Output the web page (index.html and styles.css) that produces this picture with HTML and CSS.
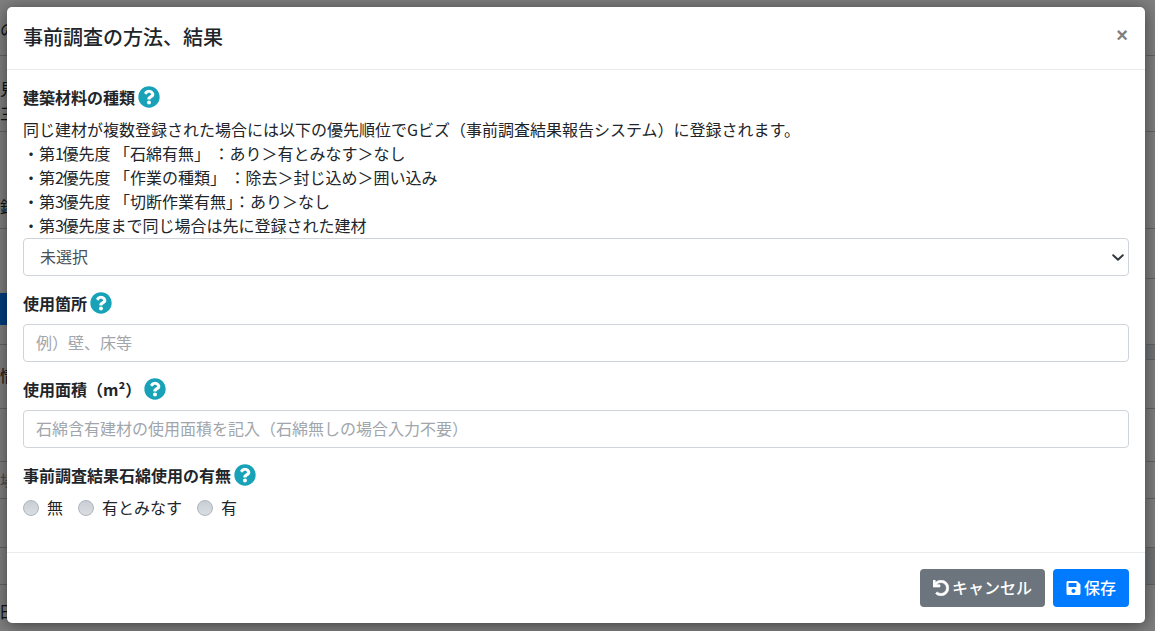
FILE: index.html
```html
<!DOCTYPE html>
<html lang="ja">
<head>
  <meta charset="UTF-8" />
  <title>事前調査の方法、結果</title>
  <link rel="stylesheet" href="styles.css">
</head>
<body>
  <div class="page-behind">
    <div class="behind-col left">
      <div class="behind-row h56"><span class="t30">の</span></div>
      <div class="behind-row h76"><span class="t20">見<br>三</span></div>
      <div class="behind-row h97"><span class="t60">録</span></div>
      <div class="behind-row h64 plain"></div>
      <div class="behind-row h32 navy"></div>
      <div class="behind-row h20"></div>
      <div class="behind-row h64"><span class="t18">情</span></div>
      <div class="behind-row h53"></div>
      <div class="behind-row h37 faint"><span class="t4">場</span></div>
      <div class="behind-row h49"></div>
      <div class="behind-row h37"></div>
      <div class="behind-row h46 plain"><span class="t14">田</span></div>
    </div>
    <div class="behind-col right">
      <div class="behind-row h56"></div>
      <div class="behind-row h76"></div>
      <div class="behind-row h97"></div>
      <div class="behind-row h50"></div>
      <div class="behind-row h66"></div>
      <div class="behind-row h15 shade"></div>
      <div class="behind-row h49"></div>
      <div class="behind-row h53"></div>
      <div class="behind-row h37"></div>
      <div class="behind-row h49"></div>
      <div class="behind-row h37 shade"></div>
    </div>
  </div>
  <div class="backdrop"></div>

  <div class="modal">
    <div class="modal-header">
      <h5>事前調査の方法、結果</h5>
      <span class="close">×</span>
    </div>
    <div class="modal-body">
      <div class="form-group">
        <label>建築材料の種類 <svg class="help" viewBox="0 0 512 512"><use href="#q"/></svg></label>
        <div class="note">
          同じ建材が複数登録された場合には以下の優先順位でGビズ（事前調査結果報告システム）に登録されます。<br>
          ・第<span class="num">1</span>優先度 「石綿有無」 ：あり＞有とみなす＞なし<br>
          ・第<span class="num">2</span>優先度 「作業の種類」 ：除去＞封じ込め＞囲い込み<br>
          ・第<span class="num">3</span>優先度 「切断作業有無」：あり＞なし<br>
          ・第<span class="num">3</span>優先度まで同じ場合は先に登録された建材
        </div>
        <div class="select">未選択
          <svg viewBox="0 0 12 7" class="chev"><path d="M1.2 1.2L6 5.800l4.800-4.600" fill="none" stroke="#343a40" stroke-width="2" stroke-linecap="round" stroke-linejoin="round"/></svg>
        </div>
      </div>
      <div class="form-group">
        <label>使用箇所 <svg class="help" viewBox="0 0 512 512"><use href="#q"/></svg></label>
        <input class="input" type="text" placeholder="例）壁、床等">
      </div>
      <div class="form-group">
        <label>使用面積（m²） <svg class="help" viewBox="0 0 512 512"><use href="#q"/></svg></label>
        <input class="input" type="text" placeholder="石綿含有建材の使用面積を記入（石綿無しの場合入力不要）">
      </div>
      <div class="form-group">
        <label>事前調査結果石綿使用の有無 <svg class="help" viewBox="0 0 512 512"><use href="#q"/></svg></label>
        <div class="radios">
          <span class="radio"><i></i>無</span>
          <span class="radio"><i></i>有とみなす</span>
          <span class="radio"><i></i>有</span>
        </div>
      </div>
    </div>
    <div class="modal-footer">
      <button class="btn gray">
        <svg class="undo" viewBox="0 0 512 512"><path fill="#fff" stroke="#fff" stroke-width="22" d="M212.3 224.3H12c-6.6 0-12-5.4-12-12V12C0 5.4 5.4 0 12 0h48c6.6 0 12 5.4 12 12v78.1C117.8 39.3 184.3 7.5 258.2 8c136.9 1 246.4 111.6 245.8 248.5C503.4 393.1 392.500 504 256 504c-64 0-122.300-24.300-166.300-64.100-5.100-4.600-5.300-12.500-.5-17.300l34-34c4.500-4.500 11.700-4.700 16.400-.5C170.800 415.300 211.600 432 256 432c97.300 0 176-78.700 176-176 0-97.400-78.700-176-176-176-58.500 0-110.300 28.500-142.300 72.300h98.600c6.600 0 12 5.400 12 12v48c0 6.600-5.400 12-12 12z"/></svg>キャンセル
      </button>
      <button class="btn blue">
        <svg class="disk" viewBox="0 0 448 512"><path fill="#fff" d="M433.900 129.900l-83.900-83.900A48 48 0 0 0 316.100 32H48C21.500 32 0 53.500 0 80v352c0 26.500 21.500 48 48 48h352c26.500 0 48-21.500 48-48V163.900a48 48 0 0 0-14.100-34zM224 416c-35.300 0-64-28.700-64-64 0-35.300 28.700-64 64-64s64 28.700 64 64c0 35.300-28.700 64-64 64zm96-304.500V212c0 6.600-5.400 12-12 12H76c-6.600 0-12-5.400-12-12V108c0-6.600 5.400-12 12-12h228.500c3.200 0 6.200 1.300 8.500 3.500l3.500 3.500A12 12 0 0 1 320 111.500z"/></svg>保存
      </button>
    </div>
  </div>

  <svg width="0" height="0" class="defs">
    <symbol id="q" viewBox="0 0 512 512">
      <path fill="#17a2b8" d="M504 256c0 137-111 248-248 248S8 393 8 256C8 119.100 119 8 256 8s248 111.100 248 248zM262.700 90c-54.500 0-89.300 23-116.500 63.800-3.500 5.300-2.400 12.400 2.700 16.300l34.700 26.300c5.200 3.900 12.600 3 16.700-2.100 17.900-22.700 30.100-35.800 57.300-35.800 20.400 0 45.700 13.100 45.700 33 0 15-12.400 22.700-32.600 34C247.100 238.500 216 258.900 216 300v4c0 6.600 5.400 12 12 12h56c6.600 0 12-5.400 12-12v-1.300c0-28.500 83.200-29.700 83.200-106.700 0-58-60.200-102-116.500-102zM256 338c-25.400 0-46 20.600-46 46 0 25.400 20.600 46 46 46s46-20.600 46-46c0-25.400-20.600-46-46-46z"/>
    </symbol>
  </svg>
</body>
</html>
```

FILE: styles.css
```css
* { box-sizing: border-box; }

html, body {
  margin: 0;
  height: 100%;
  overflow: hidden;
}

body {
  font-family: "Noto Sans CJK JP", "Noto Sans", sans-serif;
  font-size: 16px;
  color: #212529;
  background: #fff;
}

.defs { position: absolute; }

/* page that lies under the dialog, only its two edges show */
.page-behind {
  position: absolute;
  inset: 0;
  display: flex;
  justify-content: space-between;
}

.behind-col.left { width: 7px; }
.behind-col.right { width: 9px; }

.behind-row {
  border-bottom: 1px solid #c4c8cc;
  line-height: 25px;
  white-space: nowrap;
}

.behind-row.plain { border-bottom: none; }
.behind-row.navy { background: #007bff; border-bottom: none; }
.behind-row.faint { color: #999; }
.behind-row.shade { background: #e4e7ea; }

.h15 { height: 15px; }
.h20 { height: 20px; }
.h32 { height: 32px; }
.h37 { height: 37px; }
.h46 { height: 46px; }
.h49 { height: 49px; }
.h50 { height: 50px; }
.h53 { height: 53px; }
.h56 { height: 56px; }
.h64 { height: 64px; }
.h66 { height: 66px; }
.h76 { height: 76px; }
.h97 { height: 97px; }

.t4 { display: block; padding-top: 6px; }
.t14 { display: block; padding-top: 14px; }
.t18 { display: block; padding-top: 18px; }
.t20 { display: block; padding-top: 20px; }
.t30 { display: block; padding-top: 17px; }
.t60 { display: block; padding-top: 62px; }

.backdrop {
  position: absolute;
  inset: 0;
  background: rgba(0, 0, 0, 0.5);
}

.modal {
  position: absolute;
  left: 7px;
  top: 7px;
  width: 1138px;
  height: 616px;
  display: flex;
  flex-direction: column;
  background: #fff;
  border-radius: 5px;
  box-shadow: 0 2px 16px rgba(0, 0, 0, 0.5);
}

.modal-header {
  height: 63px;
  flex: none;
  display: flex;
  align-items: center;
  justify-content: space-between;
  padding: 0 17px 0 16px;
  border-bottom: 1px solid #e9ecef;
}

.modal-header h5 {
  margin: 0 0 2px;
  font-size: 20px;
  font-weight: 500;
  line-height: 30px;
}

.close {
  margin-bottom: 7px;
  font-family: "Liberation Sans", sans-serif;
  font-size: 20px;
  line-height: 24px;
  font-weight: 700;
  color: #808080;
}

.modal-body {
  flex: 1;
  padding: 16px;
}

.form-group { margin-bottom: 16px; }

label {
  display: flex;
  align-items: center;
  gap: 3px;
  height: 24px;
  margin-bottom: 8px;
  padding-bottom: 2px;
  font-weight: 700;
}

.help { width: 22px; height: 22px; }

.note {
  margin: -1px 0 1px;
  line-height: 24px;
}

/* digits in the priority list are narrower than the font's own */
.num { letter-spacing: -1.5px; }

.select, .input {
  display: block;
  width: 100%;
  height: 38px;
  border: 1px solid #ced4da;
  border-radius: 4px;
  font: inherit;
  background: #fff;
}

.select {
  display: flex;
  align-items: center;
  justify-content: space-between;
  padding: 0 4px 2px 16px;
  color: #495057;
}

.chev { width: 12px; height: 7px; margin-top: 2px; }

.input { padding: 0 12px 2px; }

.input::placeholder { color: #a0a6ac; }

.radios {
  display: flex;
  gap: 15px;
  height: 24px;
  align-items: center;
}

.radio {
  display: flex;
  align-items: center;
  gap: 8px;
  padding-bottom: 2px;
}

.radio i {
  width: 16px;
  height: 16px;
  margin-top: 2px;
  border-radius: 50%;
  background: linear-gradient(#c8ced4, #dadee2);
  border: 1px solid #adb5bd;
}

.modal-footer {
  height: 71px;
  flex: none;
  display: flex;
  justify-content: flex-end;
  align-items: center;
  gap: 8px;
  padding: 0 16px;
  border-top: 1px solid #e9ecef;
}

.btn {
  height: 38px;
  display: flex;
  align-items: center;
  gap: 3px;
  padding: 0 13px 2px;
  border: none;
  border-radius: 4px;
  font: inherit;
  font-weight: 500;
  color: #fff;
}

.btn svg { height: 16px; flex: none; margin-top: 2px; }
.btn .undo { width: 16px; }
.btn .disk { width: 15px; }
.btn.gray { background: #6c757d; }
.btn.blue { background: #007bff; }
```
